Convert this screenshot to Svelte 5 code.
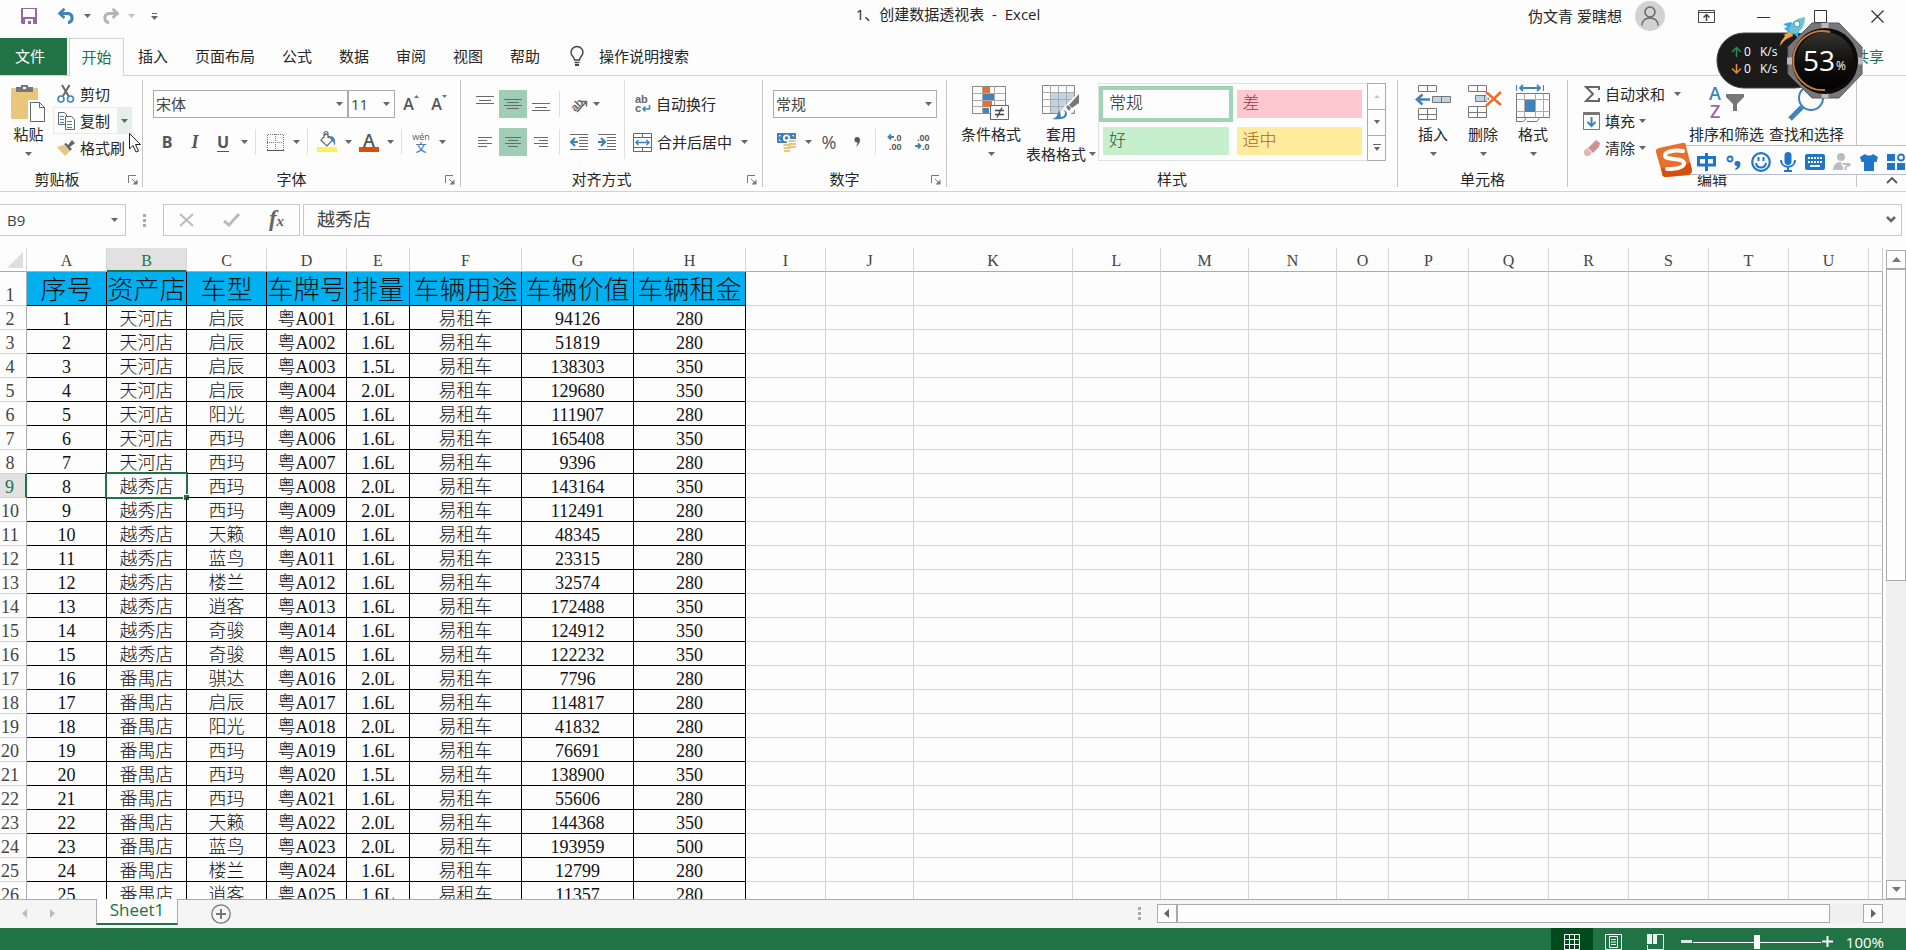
<script>
  const TABS = ["插入", "页面布局", "公式", "数据", "审阅", "视图", "帮助"];

  // ── Sheet columns ─────────────────────────────────────────────────
  const COLUMNS = [
    { id: "A", width: 80 },
    { id: "B", width: 80 },
    { id: "C", width: 80 },
    { id: "D", width: 80 },
    { id: "E", width: 63 },
    { id: "F", width: 112 },
    { id: "G", width: 112 },
    { id: "H", width: 112 },
    { id: "I", width: 80 },
    { id: "J", width: 88 },
    { id: "K", width: 159 },
    { id: "L", width: 88 },
    { id: "M", width: 88 },
    { id: "N", width: 88 },
    { id: "O", width: 52 },
    { id: "P", width: 80 },
    { id: "Q", width: 80 },
    { id: "R", width: 80 },
    { id: "S", width: 80 },
    { id: "T", width: 80 },
    { id: "U", width: 80 },
  ];

  const HEADINGS = [
    "序号",
    "资产店",
    "车型",
    "车牌号",
    "排量",
    "车辆用途",
    "车辆价值",
    "车辆租金",
  ];

  // store, model, engine, value, rent
  const CARS = [
    ["天河店", "启辰", "1.6L", 94126, 280],
    ["天河店", "启辰", "1.6L", 51819, 280],
    ["天河店", "启辰", "1.5L", 138303, 350],
    ["天河店", "启辰", "2.0L", 129680, 350],
    ["天河店", "阳光", "1.6L", 111907, 280],
    ["天河店", "西玛", "1.6L", 165408, 350],
    ["天河店", "西玛", "1.6L", 9396, 280],
    ["越秀店", "西玛", "2.0L", 143164, 350],
    ["越秀店", "西玛", "2.0L", 112491, 280],
    ["越秀店", "天籁", "1.6L", 48345, 280],
    ["越秀店", "蓝鸟", "1.6L", 23315, 280],
    ["越秀店", "楼兰", "1.6L", 32574, 280],
    ["越秀店", "逍客", "1.6L", 172488, 350],
    ["越秀店", "奇骏", "1.6L", 124912, 350],
    ["越秀店", "奇骏", "1.6L", 122232, 350],
    ["番禺店", "骐达", "2.0L", 7796, 280],
    ["番禺店", "启辰", "1.6L", 114817, 280],
    ["番禺店", "阳光", "2.0L", 41832, 280],
    ["番禺店", "西玛", "1.6L", 76691, 280],
    ["番禺店", "西玛", "1.5L", 138900, 350],
    ["番禺店", "西玛", "1.6L", 55606, 280],
    ["番禺店", "天籁", "2.0L", 144368, 350],
    ["番禺店", "蓝鸟", "2.0L", 193959, 500],
    ["番禺店", "楼兰", "1.6L", 12799, 280],
    ["番禺店", "逍客", "1.6L", 11357, 280],
  ];

  const rows = CARS.map(([store, model, engine, value, rent], i) => [
    i + 1,
    store,
    model,
    "粤A" + String(i + 1).padStart(3, "0"),
    engine,
    "易租车",
    value,
    rent,
  ]);

  const blanks = COLUMNS.slice(HEADINGS.length);

  let selected = $state({ row: 9, col: 1 });
  let zoom = $state(50);

  const cellName = $derived(COLUMNS[selected.col].id + selected.row);
  const cellValue = $derived(
    selected.row === 1
      ? HEADINGS[selected.col]
      : rows[selected.row - 2][selected.col],
  );

  const select = (row, col) => {
    selected = { row, col };
  };
</script>

{#snippet caret()}
  <svg class="caret" width="7" height="4" viewBox="0 0 7 4" aria-hidden="true">
    <path d="M0 0h7L3.5 4z" fill="currentColor" />
  </svg>
{/snippet}

{#snippet drop(label)}
  <button class="drop" aria-label={label}>{@render caret()}</button>
{/snippet}

{#snippet launcher(label)}
  <button class="launcher" aria-label={label}>
    <svg width="10" height="10" viewBox="0 0 10 10" fill="none" stroke="#777">
      <path d="M.5 8V.5H8M4 4l4 4" />
      <path d="M9.500 4.500v5h-5z" fill="#777" stroke="none" />
    </svg>
  </button>
{/snippet}

{#snippet lines(d)}
  <svg width="18" height="16" viewBox="0 0 18 16" stroke="#6a6a6a" fill="none">
    <path {d} />
  </svg>
{/snippet}

<div class="excel">
  <!-- Title bar -->
  <header class="titlebar">
    <div class="quick">
      <button class="save" aria-label="保存">
        <svg width="16" height="16" viewBox="0 0 16 16">
          <path fill="#9568a0" d="M0 0h16v16H1l-1-1z" />
          <path fill="#fdfdfd" d="M2 1h12v8H2zM4 11h8v5h-2v-3H7v3H4z" />
        </svg>
      </button>
      <button class="undo" aria-label="撤消">
        <svg width="19" height="16" viewBox="0 0 19 16" fill="none" stroke="#4182b8" stroke-width="3">
          <path d="M2 5.500h9.500a4.600 4.600 0 0 1 0 9H11" />
          <path d="M7.500.8L2.500 5.500l5 4.500" stroke-width="2.600" />
        </svg>
      </button>
      {@render drop("撤消列表")}
      <button class="redo" aria-label="恢复">
        <svg width="19" height="16" viewBox="0 0 19 16" fill="none" stroke="#b4b4b4" stroke-width="3">
          <path d="M17 5.500H7.500a4.600 4.600 0 0 0 0 9H8" />
          <path d="M11.500.8l5 4.700-5 4.500" stroke-width="2.600" />
        </svg>
      </button>
      <span class="faded">{@render drop("恢复列表")}</span>
      <button class="customize" aria-label="自定义快速访问工具栏">
        <svg width="7" height="7" viewBox="0 0 7 7" fill="#666">
          <path d="M1 0h5v1H1zM0 3h7L3.500 7z" />
        </svg>
      </button>
    </div>
    <h1>1、创建数据透视表&nbsp; -&nbsp; Excel</h1>
    <div class="account">
      <span>伪文青 爱瞎想</span>
      <span class="avatar">
        <svg width="18" height="20" viewBox="0 0 18 20" fill="none" stroke="#666" stroke-width="1.500">
          <circle cx="9" cy="6" r="5" />
          <path d="M1 19.500c0-5 3.500-7.500 8-7.500s8 2.500 8 7.500" />
        </svg>
      </span>
      <button class="win" aria-label="功能区显示选项">
        <svg width="17" height="13" viewBox="0 0 17 13" fill="none" stroke="#444">
          <path d="M.5.5h16v12H.5zM.5 2.500h16" />
          <path d="M8.500 11V5M5.500 7.500l3-3 3 3" stroke-width="1.500" />
        </svg>
      </button>
      <button class="win" aria-label="最小化">
        <svg width="13" height="13" viewBox="0 0 13 13" stroke="#333"><path d="M0 7.500h13" /></svg>
      </button>
      <button class="win" aria-label="最大化">
        <svg width="13" height="13" viewBox="0 0 13 13" fill="none" stroke="#333"><path d="M.5.5h12v12H.5z" /></svg>
      </button>
      <button class="win" aria-label="关闭">
        <svg width="13" height="13" viewBox="0 0 13 13" stroke="#333" stroke-width="1.300"><path d="M.5.5l12 12M12.500.5l-12 12" /></svg>
      </button>
    </div>
  </header>

  <!-- Ribbon tabs -->
  <nav class="tabs">
    <button class="file">文件</button>
    <button class="current">开始</button>
    {#each TABS as tab (tab)}
      <button>{tab}</button>
    {/each}
    <button class="tell">
      <svg width="14" height="20" viewBox="0 0 14 20" fill="none" stroke="#444" stroke-width="1.400">
        <path d="M4.500 14c0-3-3.500-4-3.500-7.500a6 6 0 0 1 12 0C13 10 9.500 11 9.500 14zM4.500 16.500h5" />
        <path d="M5 19h4" stroke-width="2" />
      </svg>
      操作说明搜索
    </button>
    <button class="share">共享</button>
  </nav>

  <!-- Ribbon -->
  <div class="ribbon">
    <section class="group clipboard">
      <div class="body">
        <button class="large paste">
          <svg width="36" height="38" viewBox="0 0 36 38">
            <path fill="#eac57c" d="M1 4h26v31H1a1 1 0 0 1-1-1V5z" />
            <path fill="#777" d="M5 3h5V1h7v2h5v5H5z" />
            <path fill="#fdfdfd" d="M12 3h3v2h-3zM17 16h17v22H17z" />
            <path fill="#fdfdfd" stroke="#666" d="M19.500 18.500h9l5 5v14h-14zM28.500 18.500v5h5" />
          </svg>
          <span>粘贴</span>
          <i>{@render caret()}</i>
        </button>
        <div class="stack">
          <button class="line">
            <svg width="18" height="18" viewBox="0 0 18 18" fill="none" stroke-width="1.600">
              <path d="M5 0l6.500 11M12.500 0L6 11" stroke="#666" stroke-width="2" />
              <circle cx="4" cy="14" r="3" stroke="#4182b8" />
              <circle cx="13.500" cy="14" r="3" stroke="#4182b8" />
            </svg>
            剪切
          </button>
          <div class="copy">
            <button class="line">
              <svg width="18" height="18" viewBox="0 0 18 18" fill="#fdfdfd" stroke="#666">
                <path d="M1.500.5h6l2 2v10h-8z" />
                <path d="M3 4.500h4M3 7.500h4M3 10.500h4" stroke="#4182b8" />
                <path d="M8.500 4.500h6l3 3v10h-9z" />
                <path d="M10 9.500h5M10 12.500h5M10 15.500h5" stroke="#4182b8" />
              </svg>
              复制
            </button>
            {@render drop("复制选项")}
          </div>
          <button class="line">
            <svg width="18" height="16" viewBox="0 0 18 16">
              <path fill="#eac57c" d="M0 7l7-2 6 6-5 5z" />
              <path fill="#666" d="M7 4l2-1 6 6-2 2zM11 5l4-5 3 3-5 4z" />
            </svg>
            格式刷
          </button>
        </div>
      </div>
      <footer><span>剪贴板</span>{@render launcher("剪贴板设置")}</footer>
    </section>

    <section class="group font">
      <div class="body rows">
        <div class="row">
          <label class="combo family">
            <select aria-label="字体"><option>宋体</option><option>黑体</option></select>
            {@render caret()}
          </label>
          <label class="combo size">
            <select aria-label="字号"><option>11</option><option>12</option></select>
            {@render caret()}
          </label>
          <button class="tool" aria-label="增大字号">
            <span class="grow">A</span>
            <svg width="5" height="3" viewBox="0 0 5 3" class="tick"><path d="M0 3h5L2.500 0z" fill="#4182b8" /></svg>
          </button>
          <button class="tool" aria-label="减小字号">
            <span class="grow">A</span>
            <svg width="5" height="3" viewBox="0 0 5 3" class="tick"><path d="M0 0h5L2.500 3z" fill="#4182b8" /></svg>
          </button>
        </div>
        <div class="row">
          <button class="tool bold">B</button>
          <button class="tool italic">I</button>
          <button class="tool under">U</button>
          {@render drop("下划线样式")}
          <span class="sep"></span>
          <button class="tool" aria-label="边框">
            <svg width="17" height="17" viewBox="0 0 17 17" fill="none" stroke="#777">
              <path d="M.5 16V.5h16V16M8.500 0v16M0 8.500h16" stroke-dasharray="1 1" />
              <path d="M0 16.500h17" stroke="#555" />
            </svg>
          </button>
          {@render drop("边框样式")}
          <span class="sep"></span>
          <button class="tool" aria-label="填充颜色">
            <svg width="20" height="20" viewBox="0 0 20 20">
              <path d="M9 1.500L15.500 8 10 14 4 8.500zM7 6V1.500a2 2 0 0 1 4 0V6" fill="#fdfdfd" stroke="#666" stroke-width="1.200" />
              <path d="M13 4c4 0 6 3 5 10-1-3-2-5-4-6z" fill="#4182b8" />
              <path d="M0 15h20v5H0z" fill="#fdf05a" />
            </svg>
          </button>
          {@render drop("填充颜色列表")}
          <button class="tool inked">A</button>
          {@render drop("字体颜色列表")}
          <span class="sep"></span>
          <button class="tool pinyin" aria-label="拼音"><small>wén</small><b>文</b></button>
          {@render drop("拼音选项")}
        </div>
      </div>
      <footer><span>字体</span>{@render launcher("字体设置")}</footer>
    </section>

    <section class="group align">
      <div class="body">
        <div class="rows left">
          <div class="row">
            <button class="tool" aria-label="顶端对齐">{@render lines("M0 .5h18M3 4.500h12M0 7.500h18")}</button>
            <button class="tool on" aria-label="垂直居中">{@render lines("M0 3.500h18M3 6.500h12M0 9.500h18M3 12.500h12")}</button>
            <button class="tool" aria-label="底端对齐">{@render lines("M0 7.500h18M3 11.500h12M0 14.500h18")}</button>
            <span class="sep"></span>
            <button class="orient" aria-label="方向">
              <svg width="19" height="18" viewBox="0 0 19 18">
                <text x="1" y="15" transform="rotate(-45 6 10)" class="glyphs">ab</text>
                <path d="M8 17l9-10M12.500 6.500h5v5" fill="none" stroke="#666" stroke-width="1.500" />
              </svg>
              {@render caret()}
            </button>
          </div>
          <div class="row">
            <button class="tool" aria-label="左对齐">{@render lines("M2 3.500h14M2 6.500h9M2 9.500h14M2 12.500h9")}</button>
            <button class="tool on" aria-label="居中">{@render lines("M1 3.500h16M4 6.500h10M1 9.500h16M4 12.500h10")}</button>
            <button class="tool" aria-label="右对齐">{@render lines("M2 3.500h14M7 6.500h9M2 9.500h14M7 12.500h9")}</button>
            <span class="sep"></span>
            <button class="tool" aria-label="减少缩进量">
              <svg width="18" height="16" viewBox="0 0 18 16" fill="none" stroke="#6a6a6a">
                <path d="M0 .5h18M9 3.500h9M9 6.500h9M9 9.500h9M9 12.500h9M0 15.500h18" />
                <path d="M8 8H1.500M5 4L1 8l4 4" stroke="#4182b8" stroke-width="2.200" />
              </svg>
            </button>
            <button class="tool" aria-label="增加缩进量">
              <svg width="18" height="16" viewBox="0 0 18 16" fill="none" stroke="#6a6a6a">
                <path d="M0 .5h18M9 3.500h9M9 6.500h9M9 9.500h9M9 12.500h9M0 15.500h18" />
                <path d="M0 8h6.500M3 4l4 4-4 4" stroke="#4182b8" stroke-width="2.200" />
              </svg>
            </button>
          </div>
        </div>
        <div class="rows right">
          <button class="line">
            <svg width="18" height="20" viewBox="0 0 18 20">
              <text x="2" y="9" class="glyphs">ab</text>
              <text x="2" y="18" class="glyphs">c</text>
              <path d="M16.500 11v4H10M12.500 12.500L10 15l2.500 2.500" fill="none" stroke="#4182b8" stroke-width="1.500" />
            </svg>
            自动换行
          </button>
          <div class="row">
            <button class="line">
              <svg width="19" height="19" viewBox="0 0 19 19" fill="none" stroke="#666">
                <path d="M.5.5h18v18H.5zM.5 4.500h18M.5 14.500h18M9.500.5v4M9.500 14.500v4" />
                <path d="M3 9.500h13M5.500 7L3 9.500 5.500 12M13.500 7L16 9.500 13.500 12" stroke="#4182b8" stroke-width="1.500" />
              </svg>
              合并后居中
            </button>
            {@render drop("合并选项")}
          </div>
        </div>
      </div>
      <footer><span>对齐方式</span>{@render launcher("对齐设置")}</footer>
    </section>

    <section class="group number">
      <div class="body rows">
        <div class="row">
          <label class="combo format">
            <select aria-label="数字格式"><option>常规</option><option>数值</option></select>
            {@render caret()}
          </label>
        </div>
        <div class="row">
          <button class="tool" aria-label="会计数字格式">
            <svg width="20" height="20" viewBox="0 0 20 20">
              <path fill="#4182b8" d="M0 1h19v10H0z" />
              <path fill="#fdfdfd" d="M2 3h2l-2 2zM15 3h2v2zM2 9V7l2 2z" />
              <circle cx="9.500" cy="6" r="3.500" fill="#fdfdfd" />
              <circle cx="9.500" cy="6" r="1.800" fill="#4182b8" />
              <path fill="#fdfdfd" d="M10 7h10v12H6v-8h4z" />
              <path stroke="#eac57c" stroke-width="2" d="M11.500 9h7M11.500 12h7.500M11.500 15h7.500M6.500 13h7M6.500 16h7M7 19h6" />
            </svg>
          </button>
          {@render drop("货币列表")}
          <button class="tool percent">%</button>
          <button class="tool" aria-label="千位分隔样式">
            <svg width="7" height="10" viewBox="0 0 7 10"><path fill="#555" d="M3 0a3 3 0 0 1 3 3c0 3-2 5.500-4.500 7C3 8 3.500 7 3.500 5.500A2.700 2.700 0 0 1 3 0z" /></svg>
          </button>
          <span class="sep"></span>
          <button class="tool" aria-label="增加小数位数">
            <svg width="16" height="20" viewBox="0 0 16 20">
              <text x="7" y="9" class="tiny">.0</text>
              <text x="2" y="18" class="tiny">.00</text>
              <path d="M7 5H1.500M4 2.500L1.500 5 4 7.500" fill="none" stroke="#4182b8" stroke-width="1.800" />
            </svg>
          </button>
          <button class="tool" aria-label="减少小数位数">
            <svg width="16" height="20" viewBox="0 0 16 20">
              <text x="2" y="9" class="tiny">.00</text>
              <text x="7" y="18" class="tiny">.0</text>
              <path d="M0 14h5.500M3 11.500L5.500 14 3 16.500" fill="none" stroke="#4182b8" stroke-width="1.800" />
            </svg>
          </button>
        </div>
      </div>
      <footer><span>数字</span>{@render launcher("数字设置")}</footer>
    </section>

    <section class="group styles">
      <div class="body">
        <button class="large cond">
          <svg width="38" height="36" viewBox="0 0 38 36" fill="none">
            <path fill="#fdfdfd" stroke="#888" d="M.5 2.500h33v27H.5z" />
            <path stroke="#aaa" d="M10.500 2v28M22.500 2v28M.5 9.500h33M.5 16.500h33M.5 22.500h33" />
            <path fill="#e8702c" d="M11 3h7v6h-7zM11 17h9v6h-9z" />
            <path fill="#4182b8" d="M11 10h11v6H11zM11 24h6v5h-6z" />
            <path fill="#fdfdfd" stroke="#666" d="M18.500 21.500h18v14h-18z" />
            <path stroke="#444" stroke-width="1.300" d="M23 26.500h9M23 30.500h9M30 23.500l-5 10" />
          </svg>
          <span>条件格式</span>
          <i>{@render caret()}</i>
        </button>
        <button class="large wide">
          <svg width="38" height="36" viewBox="0 0 38 36" fill="none">
            <path fill="#c0d5e3" d="M9 9h24v20H9z" />
            <path stroke="#888" d="M.5 1.500h32v28H.5z" />
            <path stroke="#aaa" d="M8.500 1v28M16.500 1v28M24.500 1v28M.5 8.500h32M.5 15.500h32M.5 22.500h32" />
            <path fill="#fdfdfd" d="M38 7L22 23l-8 13h9l15-16z" />
            <path fill="#777" d="M37 10v9l-7 5-3-3z" />
            <path fill="#777" d="M24 23l2-2 3 3-2 3z" />
            <path fill="#4182b8" d="M10 35c4-1 5-3 6-6 3-5 9-3 9 1 0 5-8 6-15 5z" />
            <path fill="#fdfdfd" d="M18 27c2-2 5-1 5 2 0 2-2 4-4 4z" />
          </svg>
          <span>套用</span>
          <span class="second">表格格式 <i>{@render caret()}</i></span>
        </button>
        <div class="gallery">
          <div class="swatches">
            <button class="normal">常规</button>
            <button class="bad">差</button>
            <button class="good">好</button>
            <button class="neutral">适中</button>
          </div>
          <div class="pager">
            <button aria-label="上一行" disabled>
              <svg width="6" height="3" viewBox="0 0 6 3"><path fill="#c4c4c4" d="M0 3h6L3 0z" /></svg>
            </button>
            <button aria-label="下一行">
              <svg width="6" height="4" viewBox="0 0 6 4"><path fill="#666" d="M0 0h6L3 4z" /></svg>
            </button>
            <button aria-label="其他">
              <svg width="8" height="7" viewBox="0 0 8 7"><path fill="#666" d="M0 0h8v1H0zM1 3h6L4 7z" /></svg>
            </button>
          </div>
        </div>
      </div>
      <footer><span>样式</span></footer>
    </section>

    <section class="group cells">
      <div class="body">
        <button class="large">
          <svg width="38" height="36" viewBox="0 0 38 36" fill="none" stroke="#777">
            <path d="M4.500 1.500h18v6h-18zM13.500 1.500v6M4.500 24.500h18v11h-18zM13.500 24.500v11M4.500 30.500h18" />
            <path fill="#c0d5e3" d="M18.500 12.500h18v6h-18zM27.500 12.500v6" />
            <path stroke="#4182b8" stroke-width="2.600" d="M16 15.500H3M8.500 10.500l-5.500 5 5.500 5" />
          </svg>
          <span>插入</span>
          <i>{@render caret()}</i>
        </button>
        <button class="large">
          <svg width="38" height="36" viewBox="0 0 38 36" fill="none" stroke="#777">
            <path d="M4.500 1.500h18v6h-18zM13.500 1.500v6M4.500 22.500h18v11h-18zM13.500 22.500v11M4.500 28.500h18" />
            <path fill="#c0d5e3" d="M11.500 11.500h13v6h-13zM20.500 11.500v6" />
            <path stroke="#fdfdfd" stroke-width="5" d="M22 8l15 13M36 8L22 22" />
            <path stroke="#e8702c" stroke-width="2.600" d="M22 8l15 13M37 8L22 22" />
          </svg>
          <span>删除</span>
          <i>{@render caret()}</i>
        </button>
        <button class="large">
          <svg width="36" height="38" viewBox="0 0 36 38" fill="none" stroke="#777">
            <path d="M1.500 9.500h33v24h-33z" />
            <path stroke="#aaa" d="M9.500 9.500v24M20.500 9.500v24M28.500 9.500v24M1.500 15.500h33M1.500 27.500h33" />
            <path fill="#4182b8" stroke="none" d="M10 16h10v12H10z" />
            <path stroke="#4182b8" d="M1.500 1v6M28.500 1v6" />
            <path stroke="#4182b8" stroke-width="1.800" d="M5 4h20M8 1L5 4l3 3M22 1l3 3-3 3" />
            <path fill="#fdfdfd" d="M1.500 37.500v-4h10l-3 4zM12 37.500h10l3-4" />
          </svg>
          <span>格式</span>
          <i>{@render caret()}</i>
        </button>
      </div>
      <footer><span>单元格</span></footer>
    </section>

    <section class="group editing">
      <div class="body">
        <div class="stack">
          <div class="row">
            <button class="line">
              <svg width="18" height="16" viewBox="0 0 18 16"><path fill="none" stroke="#666" stroke-width="2" d="M16 4V1H3l7 7-7 7h13v-3" /></svg>
              自动求和
            </button>
            {@render drop("求和选项")}
          </div>
          <div class="row">
            <button class="line">
              <svg width="18" height="18" viewBox="0 0 18 18" fill="none">
                <path stroke="#777" d="M.5.5h16v17H.5z" />
                <path stroke="#777" stroke-width="2" d="M.5 2h16" />
                <path stroke="#4182b8" stroke-width="2" d="M8.500 5v9M4.500 10l4 4 4-4" />
              </svg>
              填充
            </button>
            {@render drop("填充选项")}
          </div>
          <div class="row">
            <button class="line">
              <svg width="18" height="16" viewBox="0 0 18 16">
                <path fill="#cf9292" d="M8 5l5-5 4 3-1 4-6 6-5-5z" />
                <path fill="#e3b7b7" d="M4 8l5 5-3 3H3l-2-2v-3z" />
              </svg>
              清除
            </button>
            {@render drop("清除选项")}
          </div>
        </div>
        <button class="large sort">
          <svg width="36" height="38" viewBox="0 0 36 38">
            <text x="0" y="16" class="az" fill="#4182b8">A</text>
            <text x="1" y="34" class="az" fill="#9568a0">Z</text>
            <path fill="#777" d="M17 10h18v3l-7 7v7h-4v-7l-7-7z" />
          </svg>
          <span>排序和筛选</span>
          <i>{@render caret()}</i>
        </button>
        <button class="large sort">
          <svg width="36" height="38" viewBox="0 0 36 38" fill="none" stroke="#4182b8">
            <circle cx="22" cy="14" r="12" stroke-width="2" />
            <path stroke-width="5" d="M13 23L1 35" />
          </svg>
          <span>查找和选择</span>
          <i>{@render caret()}</i>
        </button>
      </div>
      <footer><span>编辑</span></footer>
    </section>

    <button class="collapse" aria-label="折叠功能区">
      <svg width="12" height="7" viewBox="0 0 12 7" fill="none" stroke="#555" stroke-width="1.800"><path d="M1 6l5-5 5 5" /></svg>
    </button>
  </div>

  <!-- Formula bar -->
  <div class="formula">
    <label class="name">
      <input aria-label="名称框" value={cellName} />
      {@render caret()}
    </label>
    <span class="dots"></span>
    <div class="entry">
      <button aria-label="取消">
        <svg width="15" height="14" viewBox="0 0 15 14" stroke="#bbb" stroke-width="2"><path d="M1 1l13 12M14 1L1 13" /></svg>
      </button>
      <button aria-label="输入">
        <svg width="17" height="14" viewBox="0 0 17 14" fill="none" stroke="#bbb" stroke-width="3"><path d="M1 8l5 4L16 1" /></svg>
      </button>
      <button class="fx">f<small>x</small></button>
    </div>
    <label class="value">
      <input aria-label="编辑栏" value={cellValue} />
      <svg width="10" height="7" viewBox="0 0 10 7" fill="none" stroke="#666" stroke-width="2.500"><path d="M1 1l4 4 4-4" /></svg>
    </label>
  </div>

  <!-- Sheet -->
  <main>
    <div class="sheet">
      <table>
        <colgroup>
          <col style:width="27px" />
          {#each COLUMNS as column (column.id)}
            <col style:width="{column.width}px" />
          {/each}
          <col />
        </colgroup>
        <thead>
          <tr>
            <th class="corner"><svg width="16" height="16" viewBox="0 0 16 16"><path fill="#dedede" d="M16 0v16H0z" /></svg></th>
            {#each COLUMNS as column, c (column.id)}
              <th class:picked={c === selected.col}>{column.id}</th>
            {/each}
            <th></th>
          </tr>
        </thead>
        <tbody>
          <tr class="heading">
            <th class:picked={selected.row === 1}>1</th>
            {#each HEADINGS as heading, c (heading)}
              <td class="filled" onclick={() => select(1, c)}>
                {heading}
                {#if selected.row === 1 && selected.col === c}<span class="cursor"></span>{/if}
              </td>
            {/each}
            {#each blanks as column (column.id)}<td></td>{/each}
            <td></td>
          </tr>
          {#each rows as row, r (row[0])}
            <tr>
              <th class:picked={selected.row === r + 2}>{r + 2}</th>
              {#each row as value, c (c)}
                <td class="filled" onclick={() => select(r + 2, c)}>
                  {value}
                  {#if selected.row === r + 2 && selected.col === c}<span class="cursor"></span>{/if}
                </td>
              {/each}
              {#each blanks as column (column.id)}<td></td>{/each}
              <td></td>
            </tr>
          {/each}
        </tbody>
      </table>
    </div>
    <div class="vscroll">
      <button aria-label="向上滚动"><svg width="9" height="5" viewBox="0 0 9 5"><path fill="#777" d="M0 5h9L4.500 0z" /></svg></button>
      <span class="thumb"></span>
      <span class="track"></span>
      <button aria-label="向下滚动"><svg width="9" height="5" viewBox="0 0 9 5"><path fill="#777" d="M0 0h9L4.500 5z" /></svg></button>
    </div>
  </main>

  <!-- Sheet tabs -->
  <div class="sheetbar">
    <button class="step" aria-label="上一张"><svg width="5" height="9" viewBox="0 0 5 9"><path fill="#bbb" d="M5 0v9L0 4.500z" /></svg></button>
    <button class="step" aria-label="下一张"><svg width="5" height="9" viewBox="0 0 5 9"><path fill="#bbb" d="M0 0v9l5-4.500z" /></svg></button>
    <button class="sheettab">Sheet1</button>
    <button class="add" aria-label="新工作表">
      <svg width="20" height="20" viewBox="0 0 20 20" fill="none" stroke="#777"><circle cx="10" cy="10" r="9.200" stroke-width="1.300" /><path d="M10 5v10M5 10h10" stroke-width="2" /></svg>
    </button>
    <span class="grip"></span>
    <div class="hscroll">
      <button aria-label="向左滚动"><svg width="5" height="9" viewBox="0 0 5 9"><path fill="#666" d="M5 0v9L0 4.500z" /></svg></button>
      <span class="thumb"></span>
      <span class="track"></span>
      <button aria-label="向右滚动"><svg width="5" height="9" viewBox="0 0 5 9"><path fill="#666" d="M0 0v9l5-4.500z" /></svg></button>
    </div>
  </div>

  <footer class="status">
    <button class="view active" aria-label="普通">
      <svg width="16" height="16" viewBox="0 0 16 16" fill="none" stroke="#fff"><path d="M.5.5h15v15H.5zM5.500 0v16M10.500 0v16M0 5.500h16M0 10.500h16" /></svg>
    </button>
    <button class="view" aria-label="页面布局">
      <svg width="17" height="16" viewBox="0 0 17 16" fill="none" stroke="#fff"><path d="M.5.5h16v15H.5zM4.500 2.500h8v11h-8zM6 5.500h5M6 8h5M6 10.500h5" /></svg>
    </button>
    <button class="view" aria-label="分页预览">
      <svg width="17" height="16" viewBox="0 0 17 16"><path fill="#e7f3ec" d="M0 0h5v10H0zM6 0h4v10H6zM0 11h1v5H0z" /><path fill="none" stroke="#e7f3ec" d="M10 .5h6.500v15H.5V11" /></svg>
    </button>
    <button class="zoomstep" aria-label="缩小"><svg width="11" height="11" viewBox="0 0 11 11"><path fill="#d9ebe0" d="M0 4h11v3H0z" /></svg></button>
    <input type="range" min="0" max="100" bind:value={zoom} aria-label="缩放" />
    <button class="zoomstep" aria-label="放大"><svg width="11" height="11" viewBox="0 0 11 11"><path fill="#fff" d="M0 4.500h4.500V0h2v4.500H11v2H6.500V11h-2V6.500H0z" /></svg></button>
    <button class="percentage">100%</button>
  </footer>

  <!-- Input method bar -->
  <aside class="ime">
    <svg class="logo" width="36" height="34" viewBox="0 0 36 34">
      <path fill="#e8702c" d="M3 5L26 0q4-1 4 3l6 24q0 4-4 5L10 34q-4 0-4-4L0 9q-1-3 3-4z" />
      <path fill="#d6500c" d="M5 24c9 4 20 2 29-5l2 8q0 4-4 5l-22 2q-4 0-4-4z" />
      <path fill="none" stroke="#fff" stroke-width="4" stroke-linecap="round" d="M27 8c-8-1-18 0-18 4.500 0 5 18 2 19 7.500 0 5-9 6-17 6" />
    </svg>
    <button aria-label="中英文切换">
      <svg width="19" height="20" viewBox="0 0 19 20" fill="none" stroke="#1f76c8" stroke-width="3"><path d="M1.500 5.500h16v7.500h-16zM9.500 1v18" /></svg>
    </button>
    <button aria-label="标点">
      <svg width="16" height="16" viewBox="0 0 16 16"><circle cx="4" cy="5" r="2.500" fill="none" stroke="#1f76c8" stroke-width="1.800" /><path fill="#1f76c8" d="M11 7a2.800 2.800 0 0 1 3.500 3c0 3-2 5-5 6l-.5-1c1.500-1 2-2 2-3a2.500 2.500 0 0 1 0-5z" /></svg>
    </button>
    <button aria-label="表情">
      <svg width="20" height="20" viewBox="0 0 20 20" fill="none" stroke="#1f76c8" stroke-width="2.200"><circle cx="10" cy="10" r="8.800" /><path d="M5 11c1 6 9 6 10 0M7.500 5v4M12.500 5v4" stroke-width="2" /></svg>
    </button>
    <button aria-label="语音">
      <svg width="16" height="20" viewBox="0 0 16 20" fill="none" stroke="#1f76c8" stroke-width="2"><rect x="4.500" y="0" width="7" height="13" rx="3.500" fill="#1f76c8" stroke="none" /><path d="M1 8c0 9 14 9 14 0M8 15v4M4 19h8" /></svg>
    </button>
    <button aria-label="软键盘">
      <svg width="20" height="16" viewBox="0 0 20 16"><rect width="20" height="16" rx="2" fill="#1f76c8" /><path stroke="#fff" stroke-width="2" stroke-dasharray="2 1" d="M3 4h14M3 8h14" /><path stroke="#fff" stroke-width="2" d="M5 12h10" /></svg>
    </button>
    <button aria-label="用户">
      <svg width="18" height="18" viewBox="0 0 18 18"><circle cx="8" cy="4" r="4" fill="#b9bec4" /><path fill="#b9bec4" d="M0 17c0-5 3-8 8-8l2 2v6z" /><path fill="#b9bec4" stroke="#fff" d="M9 9.500h9v4l-4 1v3h-3v-3l2-2H9z" /></svg>
    </button>
    <button aria-label="皮肤">
      <svg width="18" height="18" viewBox="0 0 18 18"><path fill="#1f76c8" d="M5 1c2 2 6 2 8 0l5 3-1.500 5H14v9H4V9H1.500L0 4z" /></svg>
    </button>
    <button aria-label="工具箱">
      <svg width="18" height="18" viewBox="0 0 18 18"><path fill="#1f76c8" d="M0 1h8v7H0zM0 10h8v7H0zM10 10h8v7h-8z" /><circle cx="14" cy="4.500" r="3" fill="none" stroke="#1f76c8" stroke-width="1.800" /></svg>
    </button>
  </aside>

  <!-- Network monitor -->
  <aside class="monitor">
    <svg width="160" height="95" viewBox="0 0 160 95">
      <defs>
        <linearGradient id="disc" x1="0" y1="0" x2="0" y2="1">
          <stop offset="0" stop-color="#33332f" />
          <stop offset="0.500" stop-color="#12110f" />
          <stop offset="1" stop-color="#000" />
        </linearGradient>
      </defs>
      <rect x="7" y="23" width="105" height="55" rx="27" fill="#1b1b1b" stroke="#444" />
      <path fill="#77777a" stroke="#5a5a5c" d="M102 13h27l23 24v27l-23 24h-27L78 64V37z" />
      <path stroke="#b9b9bb" stroke-width="7" d="M115 13v6M115 82v6M77 51h5M148 51h5" />
      <circle cx="115" cy="51" r="33" fill="#0b0b0b" />
      <circle cx="115" cy="51" r="29" fill="url(#disc)" />
      <path fill="none" stroke="#c87838" stroke-width="2" d="M120 22a29.500 29.500 0 1 0-5 58" />
      <path fill="none" stroke="#2f8b57" stroke-width="1.500" d="M26.500 47v-9M22 42l4.500-4.500L31 42" />
      <path fill="none" stroke="#e2913f" stroke-width="1.500" d="M26.500 54v9M22 58.500l4.500 4.500 4.500-4.500" />
      <text x="34" y="46">0</text>
      <text x="50" y="46">K/s</text>
      <text x="34" y="63">0</text>
      <text x="50" y="63">K/s</text>
      <text x="93" y="61" class="load">53</text>
      <text x="126" y="60">%</text>
      <path fill="#f0a23c" d="M82 21l-9 4c3 0 2 1 0 4-2 2-3 4-3 7 5-7 8-8 13-10z" />
      <path fill="#35a7e8" d="M73 14l8-2 8 9-1 7-5-5-5-1-4-4 4-1z" />
      <path fill="#6cc3d6" d="M80 17C82 11 88 8 95 7c0 6-2 13-8 16l-4 1-5-4z" />
      <circle cx="87" cy="14" r="3" fill="#fff" stroke="#3a9bb0" />
    </svg>
  </aside>

  <svg class="pointer" width="14" height="20" viewBox="0 0 14 20" aria-hidden="true">
    <path fill="#fff" stroke="#222" d="M.5.5v15.500l3.500-3.500 3 6.500 2.500-1-3-6.500h5z" />
  </svg>
</div>

<style>
  :global(body) {
    margin: 0;
    overflow: hidden;
    background: #fdfdfd;
  }

  .excel {
    position: relative;
    display: flex;
    flex-direction: column;
    height: 100vh;
    overflow: hidden;
    font: 15px/20px "Open Sans", "Noto Sans CJK SC", sans-serif;
    color: #262626;
    background: #fdfdfd;
  }

  .excel * {
    box-sizing: border-box;
  }

  svg {
    display: block;
    flex: none;
    overflow: visible;
  }

  button {
    display: flex;
    align-items: center;
    justify-content: center;
    flex: none;
    margin: 0;
    padding: 0;
    border: 0;
    background: none;
    font: inherit;
    color: inherit;
    white-space: nowrap;
  }

  input,
  select {
    min-width: 0;
    margin: 0;
    border: 0;
    outline: 0;
    background: none;
    font: inherit;
    color: #444;
    appearance: none;
  }

  i {
    font-style: normal;
  }

  .caret {
    color: #666;
  }

  /* ── Title bar ── */
  .titlebar {
    display: grid;
    grid-template-columns: 1fr auto 1fr;
    flex: none;
    height: 38px;
    padding-bottom: 10px;
  }

  .titlebar h1 {
    margin: 0 10px 0 0;
    font-size: 15px;
    font-weight: 400;
    line-height: 28px;
  }

  .quick {
    display: flex;
    align-items: center;
    height: 32px;
    padding-left: 16px;
  }

  .save {
    width: 26px;
  }

  .undo,
  .redo {
    width: 28px;
  }

  .undo {
    margin-left: 10px;
  }

  .faded {
    opacity: 0.4;
  }

  .redo {
    margin-left: 2px;
  }

  .customize {
    width: 32px;
  }

  .account {
    display: flex;
    align-items: center;
    justify-content: flex-end;
    line-height: 26px;
    white-space: nowrap;
  }

  .avatar {
    display: flex;
    align-items: center;
    justify-content: center;
    flex: none;
    width: 30px;
    height: 30px;
    margin: 0 13px;
    border-radius: 50%;
    background: #d2d2d2;
  }

  .win {
    width: 57px;
    height: 28px;
  }

  /* ── Tabs ── */
  .tabs {
    display: flex;
    flex: none;
    gap: 27px;
    height: 38px;
    border-bottom: 1px solid #d2d2d2;
  }

  .tabs button {
    height: 37px;
    padding-bottom: 2px;
  }

  .tabs .file {
    width: 67px;
    margin-right: -25px;
    padding-right: 7px;
    color: #fff;
    background: #217346;
  }

  .tabs .current {
    width: 55px;
    height: 38px;
    margin-right: -13px;
    border: 1px solid #d2d2d2;
    border-bottom: 0;
    color: #217346;
    background: #fdfdfd;
  }

  .tabs .tell {
    gap: 15px;
    margin-left: 3px;
  }

  .tabs .share {
    margin-left: auto;
    margin-right: 22px;
    color: #217346;
  }

  /* ── Ribbon ── */
  .ribbon {
    display: flex;
    flex: none;
    height: 116px;
    padding: 4px 0;
    border-bottom: 1px solid #d2d2d2;
  }

  .group {
    display: flex;
    flex-direction: column;
    flex: none;
    border-right: 1px solid #c6c6c6;
  }

  .group footer {
    display: flex;
    height: 18px;
    line-height: 20px;
  }

  .group footer span {
    flex: 1;
    text-align: center;
  }

  .launcher {
    width: 20px;
    height: 22px;
  }

  .clipboard .launcher {
    width: 18px;
  }

  .clipboard footer span {
    padding-right: 10px;
  }

  .body {
    display: flex;
    flex: 1;
    min-height: 0;
  }

  .rows {
    display: flex;
    flex-direction: column;
    gap: 10px;
    padding-top: 10px;
  }

  .row {
    display: flex;
    align-items: center;
    height: 28px;
  }

  .tool {
    width: 28px;
    height: 28px;
    color: #555;
  }

  .tool.on {
    background: #9fcdb5;
  }

  .drop {
    width: 14px;
    height: 26px;
  }

  .sep {
    width: 1px;
    height: 26px;
    margin: 0 5px 0 4px;
    background: #dedede;
  }

  .large {
    flex-direction: column;
    justify-content: flex-start;
    width: 50px;
    height: 84px;
    padding-top: 4px;
  }

  .large > svg {
    margin-bottom: auto;
  }

  .large > i {
    display: flex;
    align-items: center;
    height: 20px;
  }

  .stack {
    display: flex;
    flex-direction: column;
  }

  .stack .line,
  .stack .row {
    height: 27px;
  }

  .line {
    gap: 5px;
    justify-content: flex-start;
  }

  .combo {
    display: grid;
    align-items: center;
    height: 28px;
    border: 1px solid #ababab;
  }

  .combo select,
  .combo .caret {
    grid-area: 1 / 1;
  }

  .combo select {
    width: 100%;
    padding: 0 2px;
  }

  .combo .caret {
    justify-self: end;
    margin-right: 4px;
    pointer-events: none;
  }

  .clipboard {
    width: 143px;
  }

  .clipboard .paste {
    width: 45px;
    margin-right: 2px;
    margin-left: 6px;
  }

  .clipboard .line {
    padding-left: 4px;
  }

  .copy {
    display: flex;
    width: 79px;
    height: 27px;
    border: 1px solid #e2efe8;
  }

  .copy .line {
    flex: 1;
    height: 25px;
    padding-left: 3px;
  }

  .copy .drop {
    height: 25px;
    background: #e6f0eb;
  }

  .font {
    width: 318px;
  }

  .font .body,
  .number .body {
    padding-left: 10px;
  }

  .family {
    width: 195px;
  }

  .size {
    width: 47px;
    margin-right: 2px;
  }

  .grow {
    font-weight: 600;
    font-size: 16px;
  }

  .tick {
    align-self: flex-start;
    margin-top: 5px;
  }

  .bold,
  .under,
  .italic {
    font-size: 16px;
    font-weight: 700;
  }

  .italic {
    font-family: "Liberation Serif", serif;
    font-size: 18px;
    font-style: italic;
  }

  .under {
    text-decoration: underline;
    text-underline-offset: 3px;
  }

  .inked {
    width: 20px;
    height: 20px;
    margin: 0 4px;
    border-bottom: 5px solid #d6500c;
    font-size: 18px;
    font-weight: 600;
    line-height: 16px;
  }

  .pinyin {
    flex-direction: column;
    line-height: 11px;
  }

  .pinyin small {
    font-size: 9px;
  }

  .pinyin b {
    font-size: 11px;
    font-weight: 500;
    color: #4182b8;
  }

  .align {
    width: 302px;
  }

  .align .left {
    width: 164px;
    height: 79px;
    padding-left: 10px;
    border-right: 1px solid #e1e1e1;
  }

  .align .right {
    padding-left: 8px;
  }

  .align .line {
    height: 28px;
  }

  .align .line + .drop {
    margin-left: 5px;
  }

  .orient {
    gap: 5px;
    padding-left: 4px;
  }

  .glyphs {
    font: 700 11px "Liberation Sans", sans-serif;
    fill: #666;
  }

  .tiny {
    font: 700 9px "Liberation Sans", sans-serif;
    fill: #555;
  }

  .az {
    font: 18px "Open Sans", sans-serif;
    font-weight: 600;
  }

  .number {
    width: 184px;
  }

  .format {
    width: 164px;
  }

  .percent {
    font-size: 18px;
  }

  .styles {
    width: 451px;
  }

  .styles .body {
    padding-left: 11px;
  }

  .styles .cond {
    width: 66px;
  }

  .styles .wide {
    width: 74px;
  }

  .second {
    display: flex;
    align-items: center;
    gap: 3px;
    height: 20px;
  }

  .gallery {
    display: flex;
    width: 288px;
    height: 78px;
    margin-top: 3px;
  }

  .swatches {
    display: grid;
    grid-template-columns: 1fr 1fr;
    gap: 8px;
    flex: 1;
    padding: 6px 5px 5px 4px;
    border: 1px solid #e1e1e1;
    border-right: 0;
  }

  .swatches button {
    justify-content: flex-start;
    height: 28px;
    padding: 0 0 2px 6px;
    font-size: 17px;
    font-weight: 300;
  }

  .normal {
    outline: 4px solid #9fd5b7;
  }

  .bad {
    color: #9c3a3a;
    background: #ffc7ce;
  }

  .good {
    color: #206040;
    background: #c6efce;
  }

  .neutral {
    color: #a86422;
    background: #ffeb9c;
  }

  .pager {
    display: grid;
    grid-template-rows: 1fr 1fr 1fr;
    width: 19px;
    border: 1px solid #ababab;
  }

  .pager button + button {
    border-top: 1px solid #ababab;
  }

  .cells {
    width: 170px;
  }

  .cells .body {
    padding-left: 10px;
  }

  .editing {
    width: 289px;
  }

  .editing .body {
    padding-left: 15px;
  }

  .editing .stack {
    width: 106px;
  }

  .editing .line {
    gap: 4px;
  }

  .editing .row:first-child .drop {
    margin-left: 5px;
  }

  .editing .sort {
    width: 75px;
    margin-right: 5px;
  }

  .collapse {
    align-self: flex-end;
    width: 24px;
    height: 14px;
    margin-left: auto;
    margin-right: 2px;
  }

  /* ── Formula bar ── */
  .formula {
    display: flex;
    flex: none;
    height: 56px;
    padding: 12px 4px 12px 0;
  }

  .name,
  .entry,
  .value {
    display: flex;
    align-items: center;
    height: 32px;
    border: 1px solid #c6c6c6;
  }

  .name {
    width: 126px;
    padding: 0 7px;
    border-left: 0;
  }

  .name input {
    flex: 1;
    padding: 0;
  }

  .dots,
  .grip {
    width: 3px;
    height: 13px;
    background: repeating-linear-gradient(#aaa 0 3px, transparent 3px 5px);
  }

  .dots {
    align-self: center;
    margin: 0 17px;
  }

  .entry {
    width: 137px;
    margin-right: 3px;
  }

  .entry button {
    flex: 1;
  }

  .fx {
    align-items: baseline;
    font: italic 700 23px/26px "Liberation Serif", serif;
    color: #666;
  }

  .fx small {
    font-size: 15px;
  }

  .value {
    flex: 1;
    padding: 0 5px 2px 13px;
    font-size: 18px;
  }

  .value input {
    flex: 1;
    padding: 0;
  }

  /* ── Sheet ── */
  main {
    display: flex;
    flex: 1;
    min-height: 0;
  }

  .sheet {
    flex: 1;
    min-width: 0;
    overflow: hidden;
  }

  table {
    width: 100%;
    table-layout: fixed;
    border-spacing: 0;
    font: 18px/20px "Liberation Serif", "Noto Sans CJK SC", serif;
    color: #111;
  }

  th,
  td {
    height: 24px;
    padding: 0;
    border-right: 1px solid #d4d4d4;
    border-bottom: 1px solid #d4d4d4;
    font-weight: 300;
    line-height: 20px;
    text-align: center;
    vertical-align: bottom;
    white-space: nowrap;
  }

  th {
    color: #444;
  }

  thead th {
    border-bottom-color: #ababab;
    font-size: 16px;
  }

  thead .picked {
    border-bottom: 2px solid #217346;
    line-height: 18px;
  }

  .picked {
    color: #217346;
    background: #e1e1e1;
  }

  .corner svg {
    margin: 0 3px 3px auto;
  }

  tbody th {
    padding-right: 6px;
    border-right-color: #ababab;
  }

  tbody .picked {
    border-right: 2px solid #217346;
  }

  td:last-child {
    border-right-color: #ababab;
  }

  td.filled {
    position: relative;
    border-color: #000;
  }

  .heading th,
  .heading td {
    height: 34px;
  }

  .heading .filled {
    background: #00b0f0;
    font-size: 26px;
    line-height: 28px;
  }

  .cursor {
    position: absolute;
    inset: -2px;
    border: 2px solid #217346;
  }

  .cursor::after {
    content: "";
    position: absolute;
    right: -4px;
    bottom: -4px;
    width: 5px;
    height: 5px;
    border: 1px solid #fdfdfd;
    box-sizing: content-box;
    background: #217346;
  }

  .vscroll {
    display: flex;
    flex-direction: column;
    width: 20px;
    margin: 2px 0 0 3px;
  }

  .vscroll button,
  .hscroll button {
    width: 20px;
    height: 19px;
    border: 1px solid #ababab;
    background: #fdfdfd;
  }

  .thumb {
    border: 1px solid #ababab;
    background: #fdfdfd;
  }

  .track {
    flex: 1;
    background: #f0f0f0;
  }

  .vscroll .thumb {
    flex: 26;
  }

  .vscroll .track {
    flex: 25;
  }

  /* ── Sheet tabs ── */
  .sheetbar {
    display: flex;
    flex: none;
    height: 29px;
    background: #f5f5f5;
    box-shadow: inset 0 1px #ababab;
  }

  .step {
    width: 28px;
  }

  .step:first-child {
    margin-left: 10px;
  }

  .sheettab {
    width: 82px;
    height: 26px;
    margin: 0 33px 0 30px;
    padding-bottom: 2px;
    border: solid #ababab;
    border-width: 0 1px;
    border-bottom: 2px solid #217346;
    font-size: 17px;
    color: #217346;
    background: #fdfdfd;
  }

  .grip {
    align-self: center;
    margin: 0 16px 0 auto;
  }

  .hscroll {
    display: flex;
    width: calc(40% - 36px);
    height: 19px;
    margin: 5px 23px 0 0;
  }

  .hscroll .thumb {
    flex: 20;
  }

  /* ── Status bar ── */
  .status {
    display: flex;
    align-items: center;
    justify-content: flex-end;
    flex: none;
    height: 22px;
    padding-right: 22px;
    color: #fff;
    background: #217346;
  }

  .view {
    width: 42px;
    height: 22px;
    padding-top: 6px;
  }

  .active {
    background: #004b1c;
  }

  .zoomstep {
    width: 13px;
    padding-top: 5px;
  }

  .view + .zoomstep {
    margin-left: 3px;
  }

  .status input {
    width: 128px;
    height: 14px;
    margin: 6px 0 0;
    background: linear-gradient(#fff, #fff) center / 100% 1px no-repeat;
  }

  .status input::-webkit-slider-thumb {
    width: 6px;
    height: 14px;
    background: #fff;
    appearance: none;
  }

  .percentage {
    padding: 6px 0 0 12px;
  }

  /* ── Floating windows ── */
  .ime {
    position: absolute;
    top: 142px;
    right: 0;
    display: flex;
    align-items: center;
    gap: 2px;
    width: 250px;
    height: 35px;
    overflow: hidden;
    background: linear-gradient(#b9b9cf, #b9b9cf) 20px 3px / 100% 1px no-repeat,
      linear-gradient(#b9b9cf, #b9b9cf) 20px 32px / 100% 1px no-repeat,
      linear-gradient(#fdfdfd, #fdfdfd) 20px 3px / 100% 30px no-repeat;
  }

  .ime button {
    width: 25px;
    padding-top: 4px;
  }

  .monitor {
    position: absolute;
    top: 10px;
    right: 36px;
  }

  .monitor text {
    font: 12px "Open Sans", sans-serif;
    fill: #fff;
  }

  .monitor .load {
    font-size: 28px;
  }

  .pointer {
    position: absolute;
    top: 133px;
    left: 129px;
  }
</style>
